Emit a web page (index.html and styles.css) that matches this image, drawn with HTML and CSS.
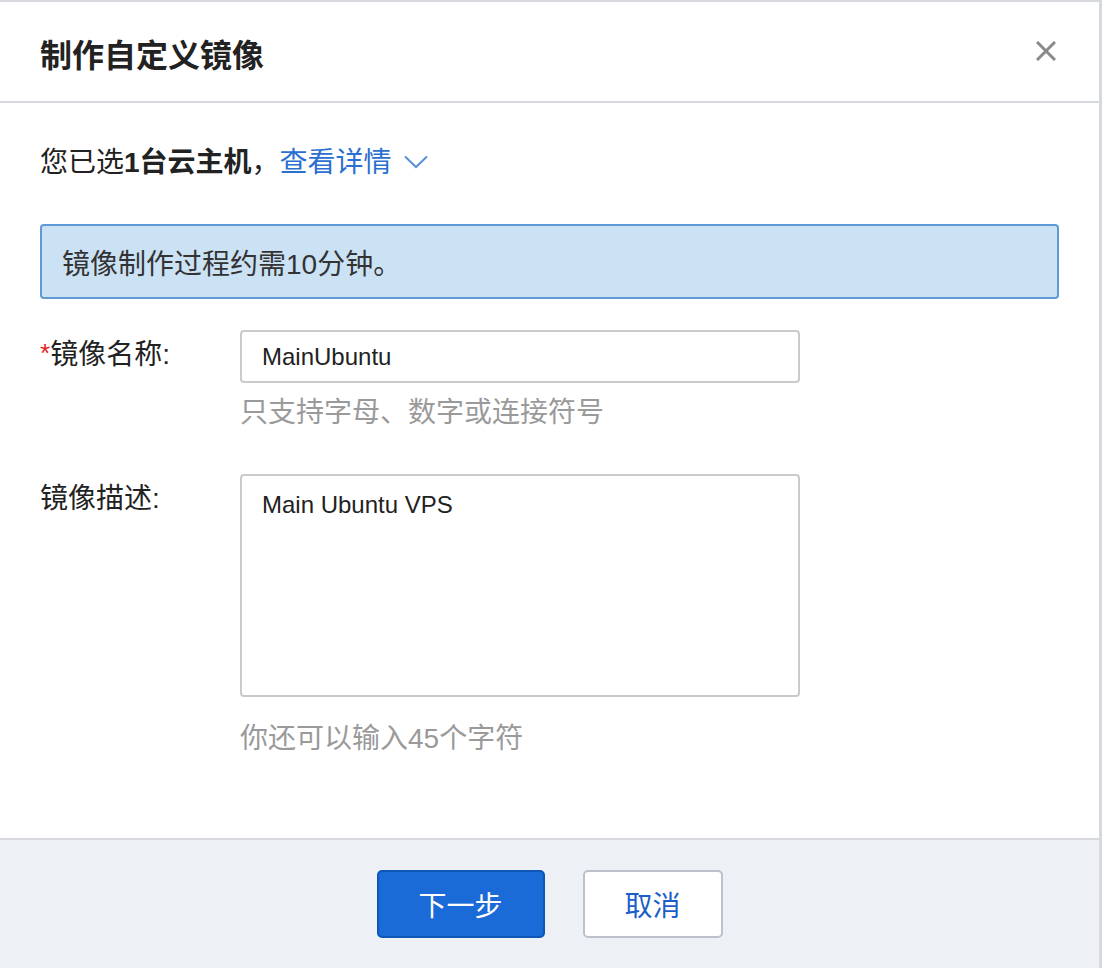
FILE: index.html
```html
<!DOCTYPE html>
<html lang="zh-CN">
<head>
    <meta charset="UTF-8">
    <meta name="viewport" content="width=device-width, initial-scale=1.0">
    <title>制作自定义镜像</title>
    <link rel="stylesheet" href="styles.css">
</head>
<body>
    <div class="dialog">
        <!-- Header -->
        <div class="dialog-header">
            <h1>制作自定义镜像</h1>
            <button class="close-btn" aria-label="关闭">
                <svg width="20" height="20" viewBox="0 0 20 20">
                    <path d="M1 1 L19 19 M19 1 L1 19" stroke="#8a8a8a" stroke-width="3" fill="none"/>
                </svg>
            </button>
        </div>

        <!-- Body -->
        <div class="dialog-body">
            <div class="selected">
                您已选<b>1台云主机</b>，<a href="#" class="detail-link">查看详情
                    <svg class="chevron" width="24" height="14" viewBox="0 0 24 14">
                        <path d="M1 1.5 L12 12 L23 1.5" stroke="#5b8fd6" stroke-width="2" fill="none"/>
                    </svg>
                </a>
            </div>

            <div class="notice">镜像制作过程约需10分钟。</div>

            <div class="form-row">
                <label class="form-label"><span class="required">*</span>镜像名称:</label>
                <div class="form-field">
                    <input type="text" class="text-input" value="MainUbuntu">
                    <div class="hint">只支持字母、数字或连接符号</div>
                </div>
            </div>

            <div class="form-row row-desc">
                <label class="form-label">镜像描述:</label>
                <div class="form-field">
                    <textarea class="text-area">Main Ubuntu VPS</textarea>
                    <div class="hint hint-count">你还可以输入45个字符</div>
                </div>
            </div>
        </div>

        <!-- Footer -->
        <div class="dialog-footer">
            <button class="btn btn-primary">下一步</button>
            <button class="btn btn-default">取消</button>
        </div>
    </div>
</body>
</html>
```

FILE: styles.css
```css
:root {
    --text-color: #222;
    --hint-color: #9a9a9a;
    --line-color: #d6d9dd;
    --link-color: #2b6fd0;
    --primary-color: #1a6ad8;
    --primary-border: #0d56b4;
    --footer-bg: #edf1f6;
}

* {
    box-sizing: border-box;
    margin: 0;
    padding: 0;
}

body {
    background-color: #fff;
    color: var(--text-color);
    font-family: "Liberation Sans", "Noto Sans CJK SC", sans-serif;
    font-size: 28px;
}

.dialog {
    width: 1102px;
    height: 968px;
    border-top: 2px solid var(--line-color);
    border-right: 3px solid var(--line-color);
    display: flex;
    flex-direction: column;
}

.dialog-header {
    height: 101px;
    border-bottom: 2px solid var(--line-color);
    display: flex;
    align-items: center;
    justify-content: space-between;
    padding: 0 43px 0 40px;
}

h1 {
    font-size: 32px;
    font-weight: bold;
    color: var(--text-color);
    margin-top: 2px;
}

.close-btn {
    background: none;
    border: none;
    width: 20px;
    height: 20px;
    cursor: pointer;
    display: flex;
    margin-top: -1px;
}

.dialog-body {
    flex: 1;
    padding: 40px 40px 0;
}

.selected {
    line-height: 40px;
    height: 40px;
    display: flex;
    align-items: center;
}

.selected b {
    font-weight: bold;
}

.detail-link {
    color: var(--link-color);
    text-decoration: none;
    display: inline-flex;
    align-items: center;
}

.chevron {
    margin-left: 12px;
    margin-top: -2px;
}

.notice {
    margin-top: 41px;
    height: 75px;
    background-color: #cbe2f5;
    border: 2px solid #5f9ad6;
    border-radius: 4px;
    padding: 0 20px;
    display: flex;
    align-items: center;
    color: #333;
}

.form-row {
    display: flex;
    margin-top: 31px;
}

.row-desc {
    margin-top: 43px;
}

.form-label {
    width: 200px;
    flex-shrink: 0;
    line-height: 50px;
}

.required {
    color: #e1251b;
    font-size: 26px;
    vertical-align: top;
    position: relative;
    top: -2px;
}

.form-field {
    display: flex;
    flex-direction: column;
}

.text-input,
.text-area {
    width: 560px;
    border: 2px solid #cacaca;
    border-radius: 4px;
    font-family: "Liberation Sans", "Noto Sans CJK SC", sans-serif;
    font-size: 24px;
    color: var(--text-color);
    padding: 0 20px;
    outline: none;
    background: #fff;
}

.text-input {
    height: 53px;
}

.text-area {
    height: 223px;
    padding-top: 14px;
    line-height: 30px;
    resize: none;
}

.hint {
    color: var(--hint-color);
    line-height: 36px;
    margin-top: 12px;
}

.hint-count {
    margin-top: 24px;
}

.dialog-footer {
    height: 130px;
    border-top: 2px solid var(--line-color);
    background-color: var(--footer-bg);
    display: flex;
    align-items: center;
    justify-content: center;
    gap: 38px;
}

.btn {
    height: 68px;
    border-radius: 5px;
    font-family: "Liberation Sans", "Noto Sans CJK SC", sans-serif;
    font-size: 28px;
    cursor: pointer;
}

.btn-primary {
    width: 168px;
    background-color: var(--primary-color);
    border: 2px solid var(--primary-border);
    color: #fff;
}

.btn-default {
    width: 140px;
    background-color: #fff;
    border: 2px solid #bcc2cb;
    color: #1a5fc8;
}
```
